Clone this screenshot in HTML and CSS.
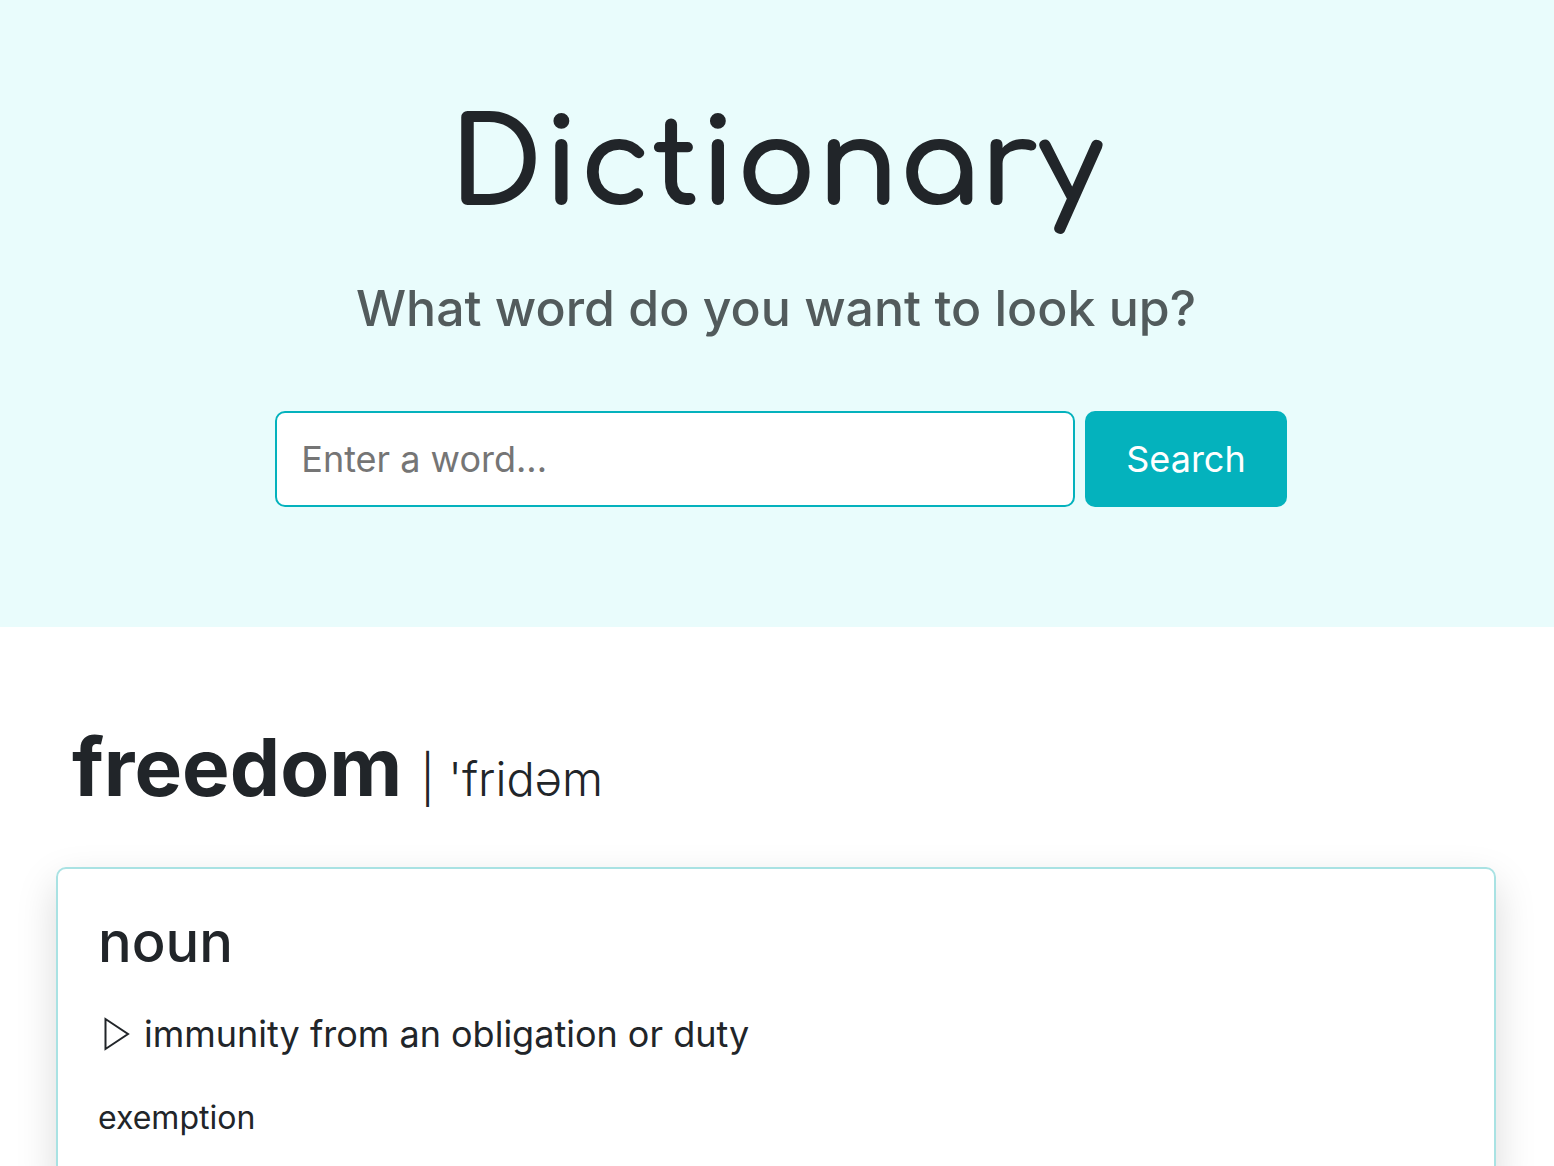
FILE: index.html
```html
<!DOCTYPE html>
<html lang="en">
<head>
<meta charset="utf-8">
<meta name="viewport" content="width=device-width, initial-scale=1">
<title>Dictionary</title>
<link rel="stylesheet" href="styles.css">
</head>
<body>
<header class="hero">
  <h1 class="title">Dictionary</h1>
  <form class="search">
    <label class="question" for="word">What word do you want to look up?</label>
    <div class="search-row">
      <input class="search-input" id="word" type="search" placeholder="Enter a word...">
      <button class="search-button" type="submit">Search</button>
    </div>
  </form>
</header>
<main class="results">
  <div class="entry">
    <h2 class="word">freedom</h2>
    <span class="phonetic">| 'fridəm</span>
  </div>
  <section class="card">
    <h3 class="part">noun</h3>
    <p class="definition"><svg class="marker" viewBox="0 0 26 34" aria-hidden="true"><path d="M1.500 2v30L24 17z"/></svg>immunity from an obligation or duty</p>
    <p class="synonym">exemption</p>
  </section>
</main>
</body>
</html>
```
FILE: styles.css
```css
* {
  box-sizing: border-box;
}

body {
  margin: 0;
  color: #212529;
  background: #fff;
  font-family: Inter, "Liberation Sans", sans-serif;
}

.hero {
  padding: 86px 26px 120px 24px;
  background: #e9fcfc;
  text-align: center;
}

.title {
  margin: 0;
  font-family: Comfortaa, Quicksand, Lato, sans-serif;
  font-size: 120px;
  font-weight: 700;
  line-height: 160px;
}

.question {
  display: block;
  margin-top: 30px;
  color: #525b5c;
  font-size: 50px;
  font-weight: 500;
  line-height: 64px;
}

.search-row {
  display: flex;
  justify-content: center;
  gap: 10px;
  margin: 71px auto 0;
  padding-left: 10px;
}

.search-input {
  flex: 0 1 800px;
  min-width: 0;
  height: 96px;
  padding: 0 24px;
  border: 2px solid #04b2bd;
  border-radius: 10px;
  background: #fff;
  color: #212529;
  font: 400 36px/44px Inter, sans-serif;
  appearance: none;
}

.search-input::placeholder {
  color: #757575;
}

.search-button {
  height: 96px;
  padding: 0 41px;
  border: 0;
  border-radius: 10px;
  background: #04b2bd;
  color: #fff;
  font: 400 36px/44px Inter, sans-serif;
}

.results {
  padding: 92px 58px 0 56px;
}

.entry {
  display: flex;
  align-items: baseline;
  gap: 18px;
  padding: 0 16px;
}

.word {
  margin: 0;
  font-size: 80px;
  font-weight: 700;
  line-height: 96px;
}

.phonetic {
  font-size: 47px;
  font-weight: 300;
}

.card {
  margin-top: 52px;
  padding: 40px;
  border: 2px solid #a9e2e3;
  border-radius: 10px;
  box-shadow: 0 16px 40px rgba(0, 0, 0, 0.15);
}

.part {
  margin: 0;
  font-size: 56px;
  font-weight: 500;
  line-height: 66px;
}

.definition {
  display: flex;
  align-items: center;
  gap: 14px;
  margin: 32px 0 0;
  padding-left: 6px;
  font-size: 36px;
  line-height: 54px;
}

.marker {
  width: 26px;
  height: 34px;
  fill: none;
  stroke: #212529;
  stroke-width: 2;
}

.synonym {
  margin: 33px 0 0;
  font-size: 32px;
  line-height: 48px;
}
```
